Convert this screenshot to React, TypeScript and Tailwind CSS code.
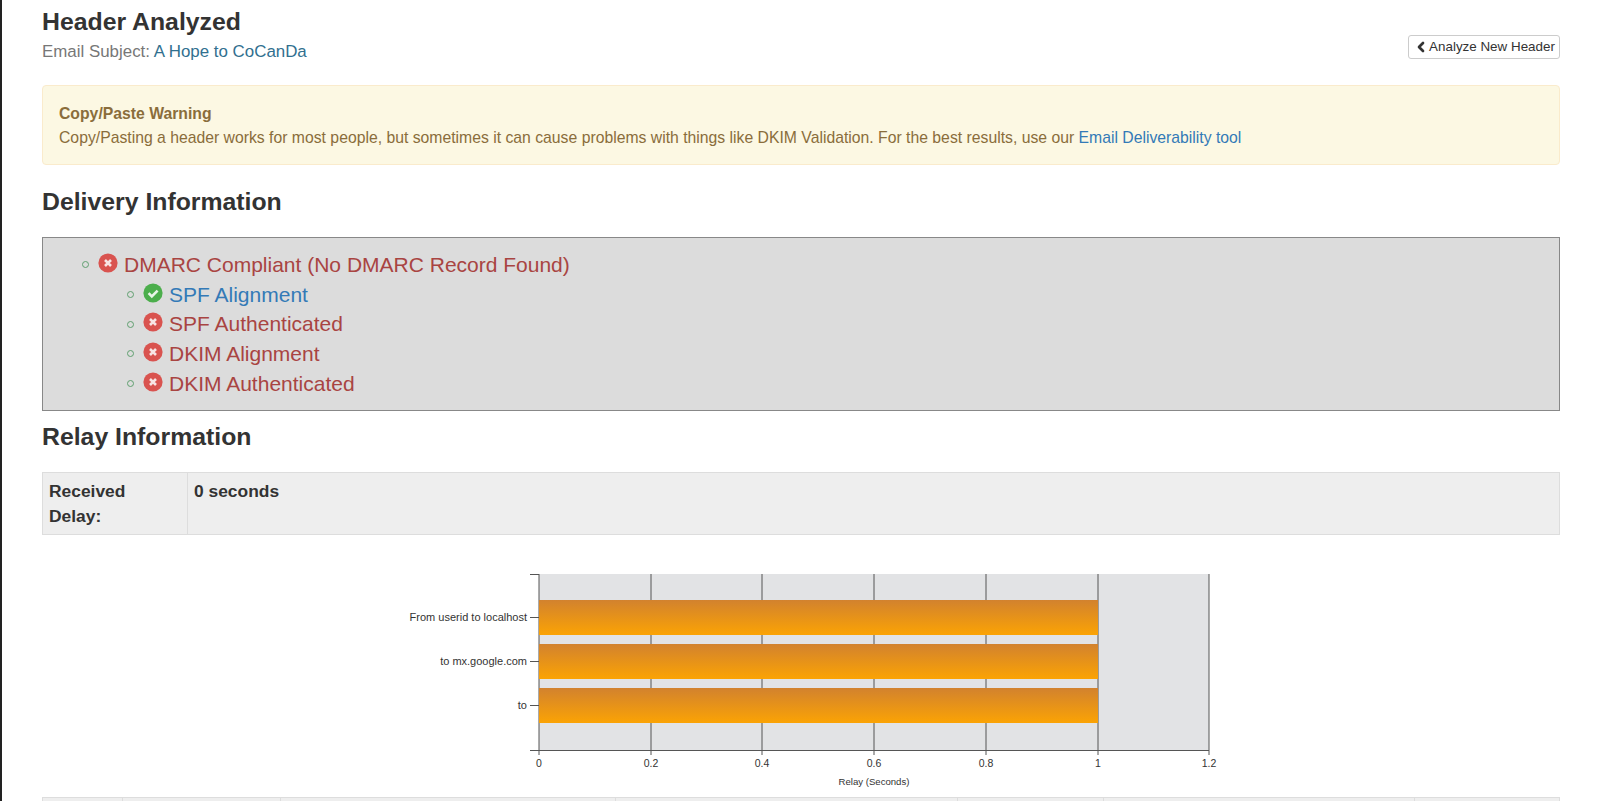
import React from 'react';
import { ChevronLeft } from 'lucide-react';

const FONT = "[font-family:'Liberation_Sans',Arial,sans-serif]";

const StatusIcon = ({ ok }: { ok: boolean }) => (
  <svg viewBox="0 0 20 20" className="w-5 h-5 shrink-0 -mt-1">
    <circle cx="10" cy="10" r="9.6" fill={ok ? '#4cae4c' : '#d9534f'} />
    {ok ? (
      <path d="M5.6 10.2l3.2 3.2 5.8-5.8" fill="none" stroke="#e8f5e8" strokeWidth="2.6" />
    ) : (
      <path d="M7 7l6 6M13 7l-6 6" fill="none" stroke="#f8e4e4" strokeWidth="2.6" />
    )}
  </svg>
);

const CheckRow = ({ label, ok, nested }: { label: string; ok?: boolean; nested?: boolean }) => (
  <li className={`flex items-center h-[29.7px] ${nested ? 'pl-[45px]' : ''}`}>
    <span className="w-[7px] h-[7px] rounded-full border border-[#5f9f6f] mr-[9px] ml-[39px] shrink-0" />
    <StatusIcon ok={!!ok} />
    <span className={`ml-[6px] text-[21px] ${ok ? 'text-[#337ab7]' : 'text-[#a94442]'}`}>{label}</span>
  </li>
);

const ticks = [
  { x: 539, label: '0' },
  { x: 651, label: '0.2' },
  { x: 762, label: '0.4' },
  { x: 874, label: '0.6' },
  { x: 986, label: '0.8' },
  { x: 1098, label: '1' },
  { x: 1209, label: '1.2' },
];

const bars = [
  { y: 600, label: 'From userid to localhost' },
  { y: 644, label: 'to mx.google.com' },
  { y: 688, label: 'to' },
];

// drawn in page coordinates, offset by the chart's own left/top
const RelayChart = () => (
  <svg width="900" height="237" viewBox="380 560 900 237" className="block">
    <defs>
      <linearGradient id="bar" x1="0" y1="0" x2="0" y2="1">
        <stop offset="0" stopColor="#d2822e" />
        <stop offset="1" stopColor="#fba304" />
      </linearGradient>
    </defs>
    <rect x="539" y="574" width="670" height="176" fill="#e2e3e5" />
    {ticks.map((t) => (
      <g key={t.label}>
        <line x1={t.x} x2={t.x} y1="574" y2="755" stroke="#555" strokeWidth="1" />
        <text x={t.x} y="767" textAnchor="middle" fontSize="10.5" fill="#333">
          {t.label}
        </text>
      </g>
    ))}
    <line x1="530" x2="1209" y1="750.5" y2="750.5" stroke="#555" strokeWidth="1.2" />
    <line x1="530" x2="539" y1="574.5" y2="574.5" stroke="#555" strokeWidth="1" />
    {bars.map((b) => (
      <g key={b.label}>
        <rect x="539" y={b.y} width="559" height="35" fill="url(#bar)" />
        <line x1="530" x2="539" y1={b.y + 17.5} y2={b.y + 17.5} stroke="#555" strokeWidth="1" />
        <text x="527" y={b.y + 21} textAnchor="end" fontSize="11" fill="#333">
          {b.label}
        </text>
      </g>
    ))}
    <text x="874" y="785" textAnchor="middle" fontSize="9.6" fill="#333">
      Relay (Seconds)
    </text>
  </svg>
);

const App: React.FC = () => {
  return (
    <div className={`h-[801px] overflow-hidden bg-white border-l-2 border-[#222] pl-10 pr-10 ${FONT}`}>
      <div className="flex justify-between items-start">
        <div>
          <h3 className="text-[24.8px] font-bold text-[#333] leading-[26px] mt-[9px]">Header Analyzed</h3>
          <p className="text-[16.9px] text-[#777] leading-6 mt-[5px]">
            Email Subject: <a className="text-[#31708f]">A Hope to CoCanDa</a>
          </p>
        </div>
        <button className="mt-[35px] h-[24px] w-[152px] flex items-center justify-center border border-[#ccc] rounded-[3px] text-[13.4px] text-[#333]">
          <ChevronLeft size={16} strokeWidth={4} />
          Analyze New Header
        </button>
      </div>

      <div className="mt-[21px] h-[80px] px-4 pt-4 bg-[#fcf8e3] border border-[#faebcc] rounded text-[#8a6d3b] text-[15.75px] leading-[23.5px]">
        <strong>Copy/Paste Warning</strong>
        <br />
        Copy/Pasting a header works for most people, but sometimes it can cause problems with things like DKIM
        Validation. For the best results, use our <a className="text-[#337ab7]">Email Deliverability tool</a>
      </div>

      <h3 className="text-[24.8px] font-bold text-[#333] leading-[26px] mt-[24px]">Delivery Information</h3>

      <ul className="mt-[22px] h-[174px] pt-[12px] bg-[#dcdcdc] border border-[#888]">
        <CheckRow label="DMARC Compliant (No DMARC Record Found)" />
        <CheckRow label="SPF Alignment" ok nested />
        <CheckRow label="SPF Authenticated" nested />
        <CheckRow label="DKIM Alignment" nested />
        <CheckRow label="DKIM Authenticated" nested />
      </ul>

      <h3 className="text-[24.8px] font-bold text-[#333] leading-[26px] mt-[13px]">Relay Information</h3>

      <div className="mt-[22px] h-[63px] flex bg-[#eee] border-y border-[#ddd] text-[17.4px] font-bold text-[#333] leading-[25px]">
        <div className="w-[146px] px-[6px] pt-[6px] border-x border-[#ddd]">Received Delay:</div>
        <div className="flex-1 px-[6px] pt-[6px] border-r border-[#ddd]">0 seconds</div>
      </div>

      <div className="mt-[25px] ml-[338px] h-[237px]">
        <RelayChart />
      </div>

      <div className="h-[10px] flex bg-[#eee] border-t border-[#ddd]">
        <div className="w-[81px] border-x border-[#ddd]" />
        <div className="w-[158px] border-r border-[#ddd]" />
        <div className="w-[335px] border-r border-[#ddd]" />
        <div className="w-[342px] border-r border-[#ddd]" />
        <div className="w-[146px] border-r border-[#ddd]" />
        <div className="w-[311px] border-r border-[#ddd]" />
        <div className="flex-1 border-r border-[#ddd]" />
      </div>
    </div>
  );
};

export default App;
